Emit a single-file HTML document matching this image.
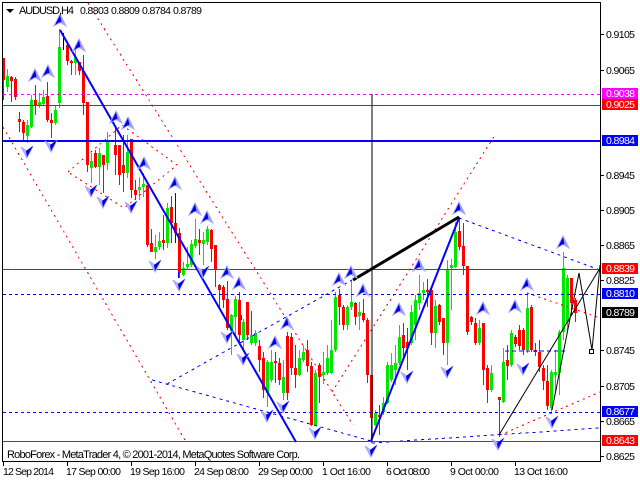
<!DOCTYPE html>
<html>
<head>
<meta charset="utf-8">
<style>
html,body{margin:0;padding:0;background:#fff;width:640px;height:480px;overflow:hidden}
svg{display:block}
text{font-family:"Liberation Sans",sans-serif;font-size:10.5px;fill:#000}
.lb{letter-spacing:-.62px}
.w{fill:#fff}
</style>
</head>
<body>
<svg width="640" height="480" viewBox="0 0 640 480" xmlns="http://www.w3.org/2000/svg">
<defs>
<g id="u"><path d="M0,-6L6,6L0,2.5L-6,6Z" fill="#9a9aff" stroke="#a8a8ff" stroke-width="1"/><path d="M0,-5L1.5,2L-1,2.5L-5,5Z" fill="#0000e6"/></g>
<g id="d"><path d="M-6,-5L0,-1L6,-6L0,6Z" fill="#b0b0ff" stroke="#a8a8ff" stroke-width="1"/><path d="M-1,-1L6,-6L0,5Z" fill="#0000e6"/></g>
</defs>

<!-- candle wicks and bodies -->
<g shape-rendering="crispEdges" fill="none">
<path stroke="#00e600" stroke-width="1" d="M7.5 69V92M27.5 120V143M31.5 95V128M39.5 93V108M43.5 90V106M55.5 105V125M59.5 29V108M75.5 45V75M91.5 153V183M99.5 148V185M107.5 132V170M127.5 135V178M139.5 177V200M143.5 173V197M155.5 235V259M159.5 232V250M167.5 203V248M183.5 262V276M187.5 247V269M191.5 240V267M195.5 219V248M203.5 232V265M207.5 226V245M231.5 314V355M235.5 296V335M243.5 319V352M251.5 335V345M255.5 330V346M267.5 360V407M271.5 350V382M283.5 360V400M299.5 350V376M303.5 345V362M315.5 370V426M323.5 352V384M327.5 345V375M331.5 320V374M335.5 292V352M347.5 305V330M351.5 280V310M359.5 302V330M375.5 410V426M383.5 397V415M387.5 362V404M391.5 353V382M395.5 345V385M399.5 325V365M411.5 305V345M415.5 295V340M419.5 275V310M423.5 282V300M435.5 300V348M447.5 260V365M451.5 259V310M455.5 222V268M479.5 320V345M491.5 365V392M503.5 348V403M511.5 330V367M527.5 293V353M551.5 370V414M555.5 350V393M559.5 330V395M563.5 252V340M567.5 275V330"/>
<path stroke="#00e600" stroke-width="3" d="M7.5 76V87M27.5 125V136M31.5 100V127M39.5 102V105M43.5 97V104M55.5 110V123M59.5 47V103M75.5 57V63M91.5 161V168M99.5 153V167M107.5 142V163M127.5 152V173M139.5 187V190M143.5 184V187M155.5 247V252M159.5 241V247M167.5 208V243M183.5 268V275M187.5 264V267M191.5 244V265M195.5 239V246M203.5 240V244M207.5 229V242M231.5 315V331M235.5 299V317M243.5 322V340M251.5 335V343M255.5 333V343M267.5 362V393M271.5 362V380M283.5 377V393M299.5 358V375M303.5 352V360M315.5 373V425M323.5 372V375M327.5 358V373M331.5 350V373M335.5 297V350M347.5 307V325M351.5 302V307M359.5 312V316M375.5 413V425M383.5 403V412M387.5 365V403M391.5 365V380M395.5 363V370M399.5 337V363M411.5 312V343M415.5 300V325M419.5 293V303M423.5 290V293M435.5 306V333M447.5 270V343M451.5 265V268M455.5 232V267M479.5 328V343M491.5 373V390M503.5 362V402M511.5 333V365M527.5 308V350M551.5 372V408M555.5 372V375M559.5 332V373M563.5 268V332M567.5 278V322"/>
<path stroke="#ff0000" stroke-width="1" d="M3.5 58V100M11.5 76V102M15.5 77V100M19.5 112V132M23.5 120V140M35.5 85V115M47.5 82V122M51.5 113V138M67.5 42V65M71.5 60V75M79.5 62V75M83.5 55V115M87.5 102V172M95.5 150V168M103.5 155V193M115.5 127V175M119.5 145V185M123.5 135V192M131.5 139V198M135.5 180V200M147.5 185V247M151.5 229V252M163.5 215V250M171.5 196V243M175.5 195V240M179.5 228V278M199.5 229V255M211.5 229V262M215.5 245V287M219.5 284V308M223.5 285V308M227.5 281V330M239.5 292V345M247.5 302V340M251.5 311V335M259.5 340V372M263.5 352V398M275.5 352V383M279.5 358V385M287.5 332V400M291.5 333V375M295.5 345V388M307.5 340V372M311.5 362V426M319.5 363V403M339.5 289V325M343.5 305V330M355.5 302V325M363.5 299V322M367.5 318V383M371.5 375V443M379.5 405V435M403.5 323V360M407.5 328V370M427.5 279V307M431.5 288V345M439.5 304V325M443.5 318V355M459.5 217V250M463.5 223V275M467.5 266V335M471.5 316V325M475.5 318V345M483.5 323V385M487.5 365V403M499.5 397V437M507.5 345V380M515.5 335V347M519.5 325V350M523.5 328V355M531.5 305V352M535.5 343V356M539.5 340V372M543.5 365V390M547.5 365V410M571.5 278V315M575.5 298V322"/>
<path stroke="#ff0000" stroke-width="3" d="M3.5 58V80M11.5 77V81M15.5 79V97M19.5 119V122M23.5 122V133M35.5 100V106M47.5 96V120M51.5 120V123M67.5 45V61M71.5 61V63M79.5 62V71M83.5 71V103M87.5 102V165M95.5 153V167M103.5 155V165M115.5 145V155M119.5 145V175M123.5 165V173M131.5 139V190M135.5 190V195M147.5 185V245M151.5 243V252M163.5 240V243M171.5 207V223M175.5 223V233M179.5 233V273M199.5 240V243M211.5 230V249M215.5 245V270M219.5 285V290M223.5 287V300M227.5 299V328M239.5 300V335M247.5 302V335M259.5 346V360M263.5 358V390M275.5 361V363M279.5 363V380M287.5 336V393M291.5 337V368M295.5 368V375M307.5 350V366M311.5 366V425M319.5 365V377M339.5 295V307M343.5 307V325M355.5 303V317M363.5 313V320M367.5 320V375M371.5 375V418M379.5 415V417M403.5 335V348M407.5 342V348M427.5 290V292M431.5 290V333M439.5 305V322M443.5 318V343M459.5 231V247M463.5 246V266M467.5 266V332M471.5 317V322M475.5 323V343M483.5 323V370M487.5 368V390M499.5 397V400M507.5 360V366M515.5 337V344M519.5 330V346M523.5 330V350M531.5 307V350M535.5 350V352M539.5 352V367M543.5 368V381M547.5 381V406M571.5 278V303M575.5 300V313"/>
<path stroke="#000" stroke-width="1" d="M63.5 33V50M241.5 315V320"/>
<path stroke="#0000ff" stroke-width="1" d="M175.5 193V243M178.5 272V278"/>
</g>

<!-- dotted trend lines -->
<g fill="none" stroke-width="1" shape-rendering="crispEdges">
<path stroke="#ff0000" stroke-dasharray="2 4" d="M88 3L353 425M3 127L186 442M332 392L495 135M68 172L122 125L177 165L124 208L68 172M527 293L600 318M500 435L600 392"/>
<path stroke="#0000ff" stroke-dasharray="3 4" d="M152 380L371 441M167 384L352 280M459 218L600 270M372 443L600 428"/>
<path stroke="#0000ff" stroke-dasharray="4 3" d="M505 351H567"/>
</g>

<!-- horizontal levels -->
<g shape-rendering="crispEdges">
<path fill="none" stroke="#ff00ff" stroke-dasharray="3 3" d="M3 94.5H600"/>
<path fill="none" stroke="#0000ff" stroke-dasharray="3 3" d="M3 294.5H600M3 412.5H600"/>
<rect x="3" y="105" width="597" height="1" fill="#ff0000"/>
<rect x="3" y="269" width="597" height="1" fill="#ff0000"/>
<rect x="3" y="441" width="597" height="1" fill="#ff0000"/>
<rect x="3" y="140" width="597" height="2" fill="#0000ff"/>
</g>

<!-- thick lines -->
<g fill="none">
<path stroke="#0000ff" stroke-width="2" d="M60 30L296 442M371 441L459 218"/>
<path stroke="#000" stroke-width="1" shape-rendering="crispEdges" d="M372 94V441"/>
<path stroke="#000" stroke-width="3" d="M353 280L459 217"/>
<path stroke="#000" stroke-width="1" d="M499 435L600 268M552 410L579 273L592 350L600 265"/>
<rect x="589.5" y="349.5" width="4" height="4" fill="#fff" stroke="#000"/>
</g>

<!-- arrows -->
<use href="#u" x="60" y="20"/><use href="#u" x="35" y="75"/><use href="#u" x="48" y="71"/><use href="#u" x="79" y="45"/><use href="#u" x="116" y="117"/><use href="#u" x="128" y="123"/><use href="#u" x="144" y="163"/><use href="#u" x="175" y="183"/><use href="#u" x="195" y="209"/><use href="#u" x="207" y="217"/><use href="#u" x="227" y="272"/><use href="#u" x="239" y="283"/><use href="#u" x="339" y="279"/><use href="#u" x="351" y="272"/><use href="#u" x="363" y="290"/><use href="#u" x="399" y="309"/><use href="#u" x="419" y="265"/><use href="#u" x="287" y="323"/><use href="#u" x="275" y="342"/><use href="#u" x="459" y="208"/><use href="#u" x="563" y="242"/><use href="#u" x="527" y="284"/><use href="#u" x="515" y="306"/><use href="#u" x="483" y="308"/>
<use href="#d" x="27" y="152"/><use href="#d" x="51" y="146"/><use href="#d" x="91" y="191"/><use href="#d" x="103" y="202"/><use href="#d" x="131" y="207"/><use href="#d" x="155" y="266"/><use href="#d" x="179" y="285"/><use href="#d" x="203" y="272"/><use href="#d" x="227" y="337"/><use href="#d" x="243" y="359"/><use href="#d" x="267" y="416"/><use href="#d" x="283" y="407"/><use href="#d" x="315" y="433"/><use href="#d" x="371" y="451"/><use href="#d" x="407" y="377"/><use href="#d" x="447" y="372"/><use href="#d" x="523" y="369"/><use href="#d" x="552" y="422"/><use href="#d" x="498" y="444"/>

<!-- frame and ticks -->
<g shape-rendering="crispEdges" fill="#000">
<rect x="2" y="2" width="599" height="1"/>
<rect x="2" y="2" width="1" height="460"/>
<rect x="600" y="2" width="1" height="460"/>
<rect x="2" y="461" width="599" height="1"/>
<path fill="none" stroke="#000" d="M601 34.5H604M601 70.5H604M601 175.5H604M601 210.5H604M601 245.5H604M601 280.5H604M601 350.5H604M601 386.5H604M601 421.5H604M601 456.5H604M3.5 462V466M67.5 462V466M131.5 462V466M195.5 462V466M259.5 462V466M323.5 462V466M387.5 462V466M451.5 462V466M515.5 462V466"/>
</g>
<path d="M6 9H14L10 13Z" fill="#000"/>

<!-- header/footer -->
<text x="19" y="14" textLength="55" lengthAdjust="spacing" style="font-size:11px">AUDUSD,H4</text>
<text x="80" y="14" class="lb">0.8803</text>
<text x="111" y="14" class="lb">0.8809</text>
<text x="142" y="14" class="lb">0.8784</text>
<text x="173" y="14" class="lb">0.8789</text>
<text x="7" y="458" textLength="293" lengthAdjust="spacing" style="font-size:11px">RoboForex - MetaTrader 4, © 2001-2014, MetaQuotes Software Corp.</text>

<!-- price boxes -->
<g shape-rendering="crispEdges">
<rect x="602" y="88" width="36" height="11" fill="#ff00ff"/>
<rect x="602" y="99" width="36" height="11" fill="#ff0000"/>
<rect x="602" y="135" width="36" height="11" fill="#0000ff"/>
<rect x="602" y="263" width="36" height="11" fill="#ff0000"/>
<rect x="602" y="288" width="36" height="11" fill="#0000ff"/>
<rect x="602" y="307" width="36" height="11" fill="#000"/>
<rect x="602" y="406" width="36" height="11" fill="#0000ff"/>
<rect x="602" y="435" width="36" height="11" fill="#ff0000"/>
</g>

<!-- price labels -->
<g class="lb">
<text x="606" y="38">0.9105</text>
<text x="606" y="74">0.9065</text>
<text x="606" y="97" class="w">0.9038</text>
<text x="606" y="108" class="w">0.9025</text>
<text x="606" y="144" class="w">0.8984</text>
<text x="606" y="179">0.8945</text>
<text x="606" y="214">0.8905</text>
<text x="606" y="249">0.8865</text>
<text x="606" y="272" class="w">0.8839</text>
<text x="606" y="284">0.8825</text>
<text x="606" y="297" class="w">0.8810</text>
<text x="606" y="316" class="w">0.8789</text>
<text x="606" y="354">0.8745</text>
<text x="606" y="390">0.8705</text>
<text x="606" y="415" class="w">0.8677</text>
<text x="606" y="425">0.8665</text>
<text x="606" y="444" class="w">0.8643</text>
<text x="606" y="460">0.8625</text>
</g>

<!-- date labels -->
<g>
<text x="3" y="475" textLength="51" lengthAdjust="spacing">12 Sep 2014</text>
<text x="66" y="475" textLength="55" lengthAdjust="spacing">17 Sep 00:00</text>
<text x="130" y="475" textLength="55" lengthAdjust="spacing">19 Sep 16:00</text>
<text x="194" y="475" textLength="55" lengthAdjust="spacing">24 Sep 08:00</text>
<text x="258" y="475" textLength="55" lengthAdjust="spacing">29 Sep 00:00</text>
<text x="322" y="475" textLength="49" lengthAdjust="spacing">1 Oct 16:00</text>
<text x="386" y="475" textLength="44" lengthAdjust="spacing">6 Oct 08:00</text>
<text x="450" y="475" textLength="49" lengthAdjust="spacing">9 Oct 00:00</text>
<text x="514" y="475" textLength="54" lengthAdjust="spacing">13 Oct 16:00</text>
</g>
</svg>
</body>
</html>
